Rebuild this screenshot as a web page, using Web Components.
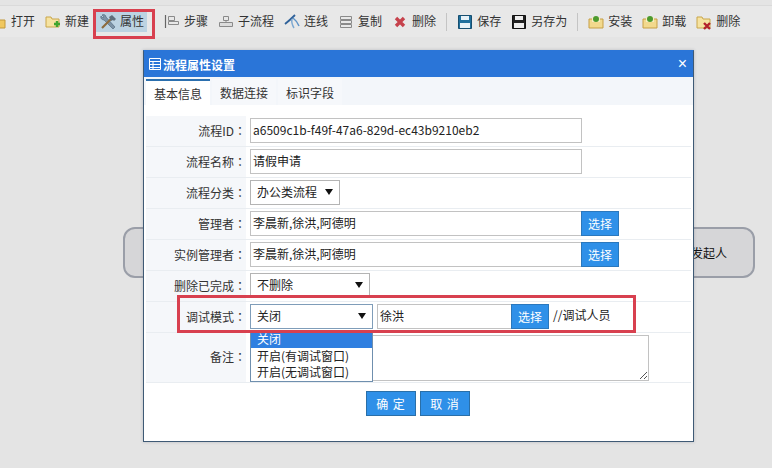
<!DOCTYPE html>
<html lang="zh-CN">
<head>
<meta charset="utf-8">
<title>流程属性设置</title>
<style>
  html, body { margin: 0; height: 100%; }
  body {
    position: relative;
    width: 772px;
    height: 468px;
    overflow: hidden;
    background: #e4e4e4;
    font: 12px "Noto Sans CJK SC", sans-serif;
    color: #222;
  }
</style>
</head>
<body>
  <flow-toolbar>
    <tool-item style="margin-left:-9px" label="打开"><svg viewBox="0 0 16 16"><path d="M1 4h5l1 2h7v8H1z" fill="#f0c75e" stroke="#c2983a"/></svg></tool-item>
    <tool-item label="新建"><svg viewBox="0 0 16 16"><path d="M1 3h5l1 2h7v8H1z" fill="#f6e3a1" stroke="#c9a64a"/><path d="M9 10h6M12 7v6" stroke="#3fa52f" stroke-width="2.4"/></svg></tool-item>
    <tool-item active style="margin-left:-3px;margin-right:7px" label="属性"><svg viewBox="0 0 16 16"><path d="M2 1c2-1 4 0 4 2L15 13l-2 2L4 6C2 6 0 4 1 2l2 2 1-1z" fill="#7d93a6" stroke="#4c6478" stroke-width=".6"/><path d="M2 14L11 5" stroke="#8d6b3d" stroke-width="2.2"/><path d="M9 3l3-2 4 4-2 2-1-1-2 1z" fill="#5f6f7c"/></svg></tool-item>
    <tool-item label="步骤"><svg viewBox="0 0 16 16"><path d="M1.500 1v13" stroke="#666" stroke-width="1.2"/><path d="M4.500 2.500h6v4h-6zM4.500 7.500h10v3h-10z" fill="none" stroke="#8a8a8a"/></svg></tool-item>
    <tool-item label="子流程"><svg viewBox="0 0 16 16"><path d="M5.500 2.500h5v4h-5z" fill="#e8e8e8" stroke="#8a8a8a"/><path d="M8 6.500v2" stroke="#8a8a8a"/><path d="M1.500 8.500h13v4h-13z" fill="#dcdcdc" stroke="#8a8a8a"/></svg></tool-item>
    <tool-item label="连线"><svg viewBox="0 0 16 16"><path d="M1 10Q6 6 11 1" fill="none" stroke="#2f6199" stroke-width="1.800"/><path d="M8 5q-1 4 2 9" fill="none" stroke="#7ea9d2" stroke-width="1.500"/><path d="M9 4q4 3 6 8" fill="none" stroke="#5f94c8" stroke-width="1.500"/></svg></tool-item>
    <tool-item label="复制"><svg viewBox="0 0 16 16"><path d="M2.500 2.500h11v3h-11zM2.500 6.500h11v3h-11zM2.500 10.500h11v3h-11z" fill="#e8e8e8" stroke="#8a8a8a"/></svg></tool-item>
    <tool-item label="删除"><svg viewBox="0 0 16 16"><path d="M4 4l8 8M12 4l-8 8" stroke="#c6424c" stroke-width="3.400"/></svg></tool-item>
    <tool-sep></tool-sep>
    <tool-item label="保存"><svg viewBox="0 0 16 16"><path d="M1.500 1.500h13v13h-13z" fill="#1f6f9c" stroke="#174f70"/><path d="M4 2h8v4H4z" fill="#e6f1f7"/><path d="M3 9h10v5H3z" fill="#e6f1f7"/></svg></tool-item>
    <tool-item label="另存为"><svg viewBox="0 0 16 16"><path d="M1.500 1.500h13v13h-13z" fill="#222" stroke="#111"/><path d="M4 2h8v4H4z" fill="#eee"/><path d="M3 9h10v5H3z" fill="#eee"/></svg></tool-item>
    <tool-sep></tool-sep>
    <tool-item label="安装"><svg viewBox="0 0 16 16"><path d="M1 5h14v9H1z" fill="#f2d98d" stroke="#c79f45"/><path d="M4 3h8v5H4z" fill="#f7ecc4"/><circle cx="8" cy="5" r="3" fill="#4d9b2f"/></svg></tool-item>
    <tool-item label="卸载"><svg viewBox="0 0 16 16"><path d="M1 5h14v9H1z" fill="#f2d98d" stroke="#c79f45"/><path d="M4 3h8v5H4z" fill="#f7ecc4"/><circle cx="8" cy="5" r="3" fill="#4d9b2f"/></svg></tool-item>
    <tool-item label="删除"><svg viewBox="0 0 16 16"><path d="M1 3h5l1 2h7v9H1z" fill="#f6e3a1" stroke="#c9a64a"/><path d="M8 9l6 6M14 9l-6 6" stroke="#b3212b" stroke-width="2.400"/></svg></tool-item>
  </flow-toolbar>

  <flow-node>发起人</flow-node>

  <flow-dialog heading="流程属性设置">
    <form-row label="流程ID"><text-field style="width:332px">a6509c1b-f49f-47a6-829d-ec43b9210eb2</text-field></form-row>
    <form-row label="流程名称"><text-field style="width:332px">请假申请</text-field></form-row>
    <form-row label="流程分类"><drop-select style="width:90px">办公类流程</drop-select></form-row>
    <form-row label="管理者"><text-field style="width:332px">李晨新,徐洪,阿德明</text-field><pick-button></pick-button></form-row>
    <form-row label="实例管理者"><text-field style="width:332px">李晨新,徐洪,阿德明</text-field><pick-button></pick-button></form-row>
    <form-row label="删除已完成"><drop-select style="width:120px">不删除</drop-select></form-row>
    <form-row label="调试模式">
      <drop-select style="width:123px" focused options="关闭|开启(有调试窗口)|开启(无调试窗口)">关闭</drop-select>
      <text-field style="width:135px;margin-left:4px">徐洪</text-field><pick-button></pick-button>
      <span style="margin-left:4px">//调试人员</span>
    </form-row>
    <form-row label="备注" tall><text-area-box></text-area-box></form-row>
  </flow-dialog>

  <red-mark style="left:93px;top:9px;width:56px;height:24px"></red-mark>
  <red-mark style="left:177px;top:295px;width:453px;height:32px"></red-mark>

<script>
class FlowToolbar extends HTMLElement {
  constructor() {
    super();
    this.attachShadow({ mode: 'open' });
    this.shadowRoot.innerHTML = `
      <style>
        :host {
          display: flex;
          align-items: center;
          gap: 10px;
          height: 31px;
          margin-top: 5px;
          white-space: nowrap;
          border-top: 1px solid #dadada;
          background: #e8e8e8;
        }
      </style>
      <slot></slot>
    `;
  }
}

class ToolItem extends HTMLElement {
  constructor() {
    super();
    this.attachShadow({ mode: 'open' });
    this.shadowRoot.innerHTML = `
      <style>
        :host {
          display: flex;
          align-items: center;
          gap: 4px;
          height: 21px;
          color: #333;
        }
        :host([active]) {
          padding: 0 3px 0 4px;
          background: #bcd3e2;
        }
        #label { padding-bottom: 2px; }
        ::slotted(svg) {
          width: 16px;
          height: 16px;
          flex: none;
        }
      </style>
      <slot></slot><span id="label"></span>
    `;
  }

  connectedCallback() {
    this.shadowRoot.getElementById('label').textContent = this.getAttribute('label');
  }
}

class ToolSep extends HTMLElement {
  constructor() {
    super();
    this.attachShadow({ mode: 'open' });
    this.shadowRoot.innerHTML = `
      <style>
        :host {
          display: block;
          width: 1px;
          height: 18px;
          background: #c4c4c4;
        }
      </style>
    `;
  }
}

class FlowNode extends HTMLElement {
  constructor() {
    super();
    this.attachShadow({ mode: 'open' });
    this.shadowRoot.innerHTML = `
      <style>
        :host {
          position: absolute;
          left: 123px;
          top: 227px;
          width: 632px;
          height: 51px;
          box-sizing: border-box;
          display: flex;
          align-items: center;
          justify-content: flex-end;
          padding-right: 26px;
          border: 2px solid #9a9ea8;
          border-radius: 12px;
          background: #d6d6d8;
          color: #111;
        }
      </style>
      <slot></slot>
    `;
  }
}

class FlowDialog extends HTMLElement {
  constructor() {
    super();
    this.attachShadow({ mode: 'open' });
    this.shadowRoot.innerHTML = `
      <style>
        :host {
          position: absolute;
          left: 143px;
          top: 50px;
          width: 551px;
          height: 392px;
          box-sizing: border-box;
          display: flex;
          flex-direction: column;
          border: 1px solid #3f5a75;
          border-top-color: #2a75d8;
          background: #fff;
          box-shadow: 0 0 3px rgba(80, 90, 110, .3);
        }
        #title {
          display: flex;
          align-items: center;
          gap: 2px;
          height: 26px;
          flex: none;
          padding: 0 5px;
          background: #2a75d8;
          color: #fff;
          font-weight: bold;
        }
        #title svg { width: 12px; height: 12px; }
        #title span { flex: 1; }
        #title b { font: 16px "Liberation Sans", sans-serif; padding-right: 1px; }
        #tabs {
          display: flex;
          gap: 2px;
          height: 28px;
          flex: none;
          box-sizing: border-box;
          padding: 2px 0 0 2px;
          background: #f3f6fa;
        }
        .tab {
          display: flex;
          align-items: center;
          padding: 0 8px;
          color: #333;
          background: #f6f8fb;
        }
        .tab.on {
          border-top: 2px solid #2b6fae;
          background: #fff;
        }
        #body { padding: 11px 2px 0; }
        #actions {
          display: flex;
          justify-content: center;
          gap: 4px;
          margin-top: 8px;
          padding-right: 1px;
        }
        button {
          width: 50px;
          height: 25px;
          padding: 0;
          border: 1px solid #2a6fa8;
          background: #2f90e8;
          color: #fff;
          font: inherit;
          letter-spacing: 1px;
        }
      </style>
      <div id="title">
        <svg viewBox="0 0 12 12"><path d="M.5.500h11v11H.5zM.5 3.500h11M.5 6.500h11M.5 9.500h11M4 3.500v8" fill="none" stroke="#fff"/></svg>
        <span id="heading"></span>
        <b>×</b>
      </div>
      <div id="tabs">
        <div class="tab on">基本信息</div>
        <div class="tab">数据连接</div>
        <div class="tab">标识字段</div>
      </div>
      <div id="body"><slot></slot></div>
      <div id="actions">
        <button>确 定</button>
        <button>取 消</button>
      </div>
    `;
  }

  connectedCallback() {
    this.shadowRoot.getElementById('heading').textContent = this.getAttribute('heading');
  }
}

class FormRow extends HTMLElement {
  constructor() {
    super();
    this.attachShadow({ mode: 'open' });
    this.shadowRoot.innerHTML = `
      <style>
        :host {
          display: grid;
          grid-template-columns: 100px 1fr;
          height: 31px;
          box-sizing: border-box;
          border-bottom: 1px solid #e9edf1;
        }
        :host([tall]) { height: 50px; }
        #label {
          display: flex;
          align-items: center;
          justify-content: flex-end;
          padding-bottom: 2px;
          background: #f5f7fa;
          color: #333;
        }
        #label i { font: normal 12px "Noto Sans CJK TC", sans-serif; }
        #value {
          display: flex;
          align-items: flex-start;
          line-height: 22px;
          padding: 2px 0 0 4px;
          color: #222;
        }
      </style>
      <div id="label"><span id="text"></span><i lang="zh-TW">：</i></div>
      <div id="value"><slot></slot></div>
    `;
  }

  connectedCallback() {
    this.shadowRoot.getElementById('text').textContent = this.getAttribute('label');
  }
}

class TextField extends HTMLElement {
  constructor() {
    super();
    this.attachShadow({ mode: 'open' });
    this.shadowRoot.innerHTML = `
      <style>
        :host {
          display: block;
          height: 25px;
          box-sizing: border-box;
          padding: 0 2px;
          border: 1px solid #c2c2c2;
          background: #fff;
          line-height: 21px;
          white-space: nowrap;
          overflow: hidden;
        }
      </style>
      <slot></slot>
    `;
  }
}

class PickButton extends HTMLElement {
  constructor() {
    super();
    this.attachShadow({ mode: 'open' });
    this.shadowRoot.innerHTML = `
      <style>
        :host {
          display: block;
          width: 38px;
          height: 25px;
          margin-left: -1px;
          box-sizing: border-box;
          border: 1px solid #2b78bd;
          background: #2f90e8;
          color: #fff;
          text-align: center;
          line-height: 23px;
        }
      </style>
      选择
    `;
  }
}

class DropSelect extends HTMLElement {
  constructor() {
    super();
    this.attachShadow({ mode: 'open' });
    this.shadowRoot.innerHTML = `
      <style>
        :host {
          display: block;
          position: relative;
          height: 25px;
          box-sizing: border-box;
          padding-left: 6px;
          border: 1px solid #b4b4b4;
          background: #fff;
          line-height: 21px;
        }
        :host([focused]) { border-color: #7f9db9; }
        #arrow {
          position: absolute;
          right: 6px;
          top: 8px;
          border-left: 4px solid transparent;
          border-right: 4px solid transparent;
          border-top: 6px solid #111;
        }
        #menu {
          position: absolute;
          left: -1px;
          right: -1px;
          top: 25px;
          z-index: 2;
          border: 1px solid #6f8fae;
          background: #fff;
          line-height: 16.500px;
        }
        #menu div { padding-left: 6px; color: #222; }
        #menu div:first-child { background: #2f7fe0; color: #fff; }
      </style>
      <slot></slot><span id="arrow"></span>
    `;
  }

  connectedCallback() {
    const options = this.getAttribute('options');
    if (!options) return;
    const menu = document.createElement('div');
    menu.id = 'menu';
    options.split('|').forEach(text => {
      const row = document.createElement('div');
      row.textContent = text;
      menu.appendChild(row);
    });
    this.shadowRoot.appendChild(menu);
  }
}

class TextAreaBox extends HTMLElement {
  constructor() {
    super();
    this.attachShadow({ mode: 'open' });
    this.shadowRoot.innerHTML = `
      <style>
        :host {
          display: block;
          position: relative;
          width: 399px;
          height: 46px;
          box-sizing: border-box;
          border: 1px solid #c2c2c2;
          background: #fff;
        }
        svg {
          position: absolute;
          right: 0;
          bottom: 0;
          width: 9px;
          height: 9px;
        }
      </style>
      <svg viewBox="0 0 9 9"><path d="M1 8l7-7M5 8l3-3" stroke="#555" fill="none"/></svg>
    `;
  }
}

class RedMark extends HTMLElement {
  constructor() {
    super();
    this.attachShadow({ mode: 'open' });
    this.shadowRoot.innerHTML = `
      <style>
        :host {
          position: absolute;
          z-index: 5;
          border: 3px solid #d8404f;
          pointer-events: none;
        }
      </style>
    `;
  }
}

customElements.define('flow-toolbar', FlowToolbar);
customElements.define('tool-item', ToolItem);
customElements.define('tool-sep', ToolSep);
customElements.define('flow-node', FlowNode);
customElements.define('flow-dialog', FlowDialog);
customElements.define('form-row', FormRow);
customElements.define('text-field', TextField);
customElements.define('pick-button', PickButton);
customElements.define('drop-select', DropSelect);
customElements.define('text-area-box', TextAreaBox);
customElements.define('red-mark', RedMark);
</script>
</body>
</html>
